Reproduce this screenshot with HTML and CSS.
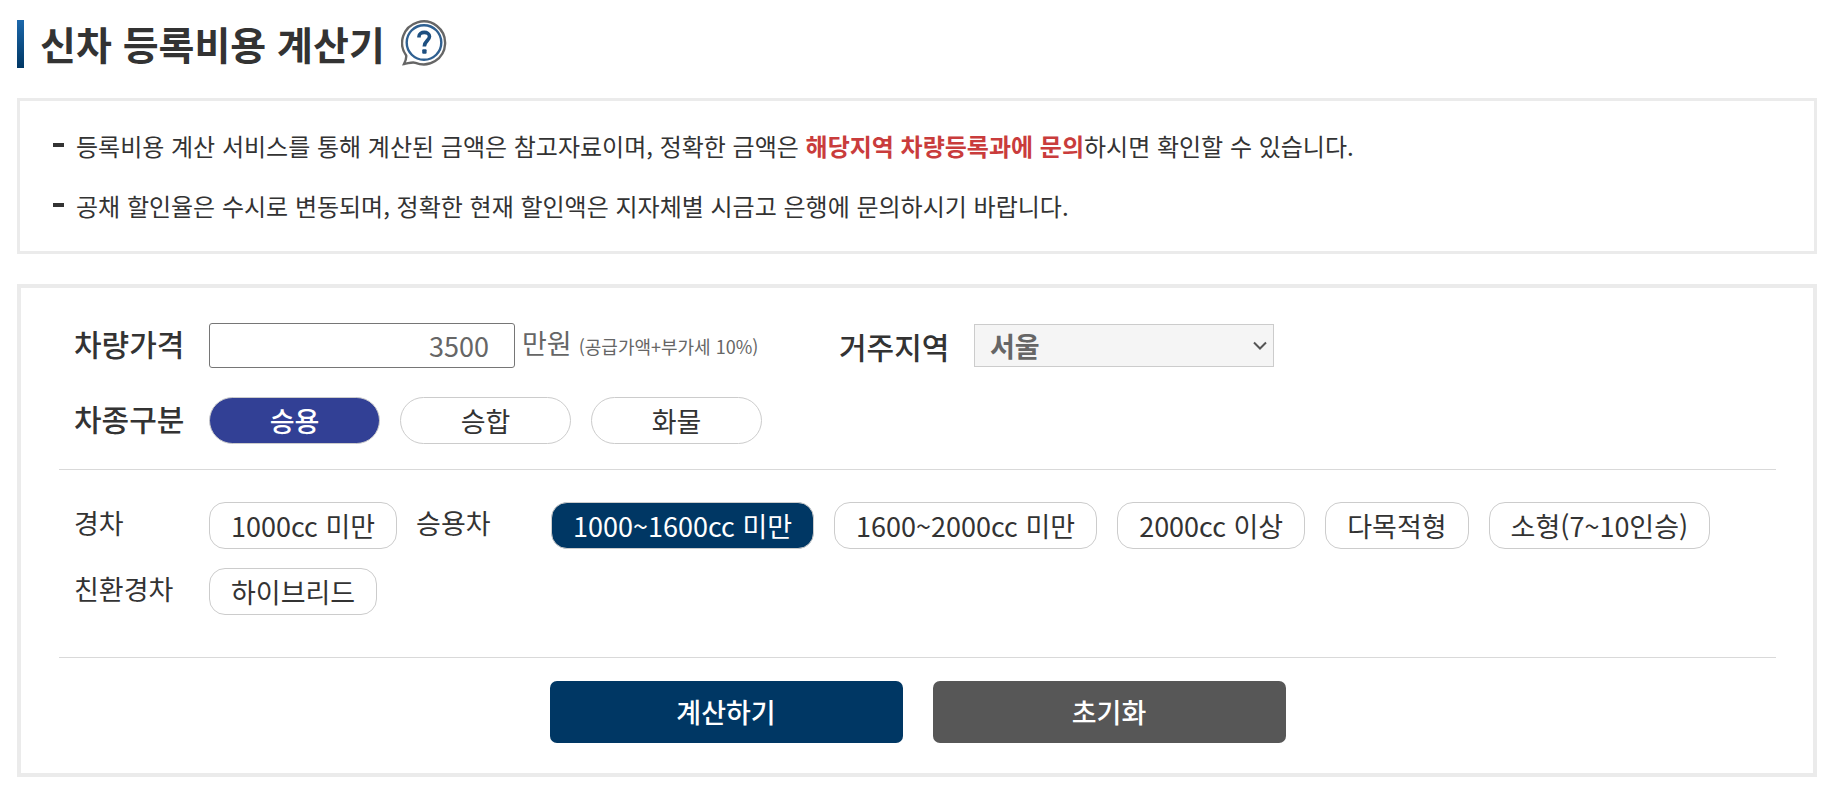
FILE: index.html
```html
<!DOCTYPE html>
<html lang="ko">
<head>
    <meta charset="UTF-8">
    <meta name="viewport" content="width=device-width, initial-scale=1.0">
    <title>신차 등록비용 계산기</title>
    <link rel="stylesheet" href="styles.css">
</head>
<body>
    <header class="page-title">
        <h1>신차 등록비용 계산기</h1>
        <button type="button" class="help-button" aria-label="도움말">
            <svg viewBox="0 0 46 46" width="46" height="46" fill="none">
                <path d="M3 44 C4.5 41 5.5 38 5.2 35.5 A21.5 21.5 0 1 1 14.5 42.8 C11 41.5 7 43.6 3 44 Z" stroke="#666" stroke-width="2.4"/>
                <circle cx="23" cy="22.5" r="17.3" stroke="#2f6091" stroke-width="2.4"/>
                <path d="M18 17.5 V16.5 C18 11 28.5 11 28.5 16.5 C28.5 20.5 23.3 21 23.3 26.5" stroke="#1d4f80" stroke-width="3.6"/>
                <rect x="21.2" y="29.3" width="4.4" height="4.4" rx="1" fill="#1d4f80"/>
            </svg>
        </button>
    </header>

    <ul class="notice">
        <li>등록비용 계산 서비스를 통해 계산된 금액은 참고자료이며, 정확한 금액은 <strong>해당지역 차량등록과에 문의</strong>하시면 확인할 수 있습니다.</li>
        <li>공채 할인율은 수시로 변동되며, 정확한 현재 할인액은 지자체별 시금고 은행에 문의하시기 바랍니다.</li>
    </ul>

    <form class="calculator">
        <div class="section basic">
            <div class="row">
                <label class="label" for="price">차량가격</label>
                <div class="price">
                    <input type="text" id="price" class="price-input" value="3500">
                    <span class="unit">만원</span>
                    <span class="hint">(공급가액+부가세 10%)</span>
                </div>
                <label class="label region-label" for="region">거주지역</label>
                <div class="region">
                    <select id="region">
                        <option selected>서울</option>
                        <option>부산</option>
                        <option>대구</option>
                        <option>인천</option>
                    </select>
                    <svg class="arrow" viewBox="0 0 14 9" width="14" height="9" fill="none">
                        <path d="M1 1.5 L7 7.5 L13 1.5" stroke="#555" stroke-width="2"/>
                    </svg>
                </div>
            </div>
            <div class="row">
                <span class="label">차종구분</span>
                <div class="options">
                    <button type="button" class="pill active">승용</button>
                    <button type="button" class="pill">승합</button>
                    <button type="button" class="pill">화물</button>
                </div>
            </div>
        </div>

        <div class="section detail">
            <div class="group">
                <span class="sub-label">경차</span>
                <button type="button" class="option">1000cc 미만</button>
            </div>
            <div class="group">
                <span class="sub-label">승용차</span>
                <div class="options">
                    <button type="button" class="option active">1000~1600cc 미만</button>
                    <button type="button" class="option">1600~2000cc 미만</button>
                    <button type="button" class="option">2000cc 이상</button>
                    <button type="button" class="option">다목적형</button>
                    <button type="button" class="option">소형(7~10인승)</button>
                </div>
            </div>
            <div class="group">
                <span class="sub-label">친환경차</span>
                <button type="button" class="option">하이브리드</button>
            </div>
        </div>

        <div class="actions">
            <button type="button" class="submit">계산하기</button>
            <button type="reset" class="reset">초기화</button>
        </div>
    </form>

    <script>
        // one choice per kind of button
        function setupChoice(selector) {
            const buttons = document.querySelectorAll(selector);
            buttons.forEach(button => {
                button.addEventListener('click', () => {
                    buttons.forEach(other => other.classList.remove('active'));
                    button.classList.add('active');
                });
            });
        }

        setupChoice('.pill');
        setupChoice('.option');
    </script>
</body>
</html>
```
FILE: styles.css
```css
* {
    box-sizing: border-box;
}

body {
    margin: 0;
    padding: 20px 11px 14px 17px;
    background: #fff;
    color: #333;
    font-family: "Noto Sans CJK KR", sans-serif;
    font-size: 27px;
    line-height: 38px;
}

button,
input,
select {
    font-family: inherit;
    font-size: inherit;
    line-height: inherit;
}

button {
    cursor: pointer;
}

.page-title {
    display: flex;
    align-items: center;
    gap: 16px;
    height: 48px;
    margin-bottom: 30px;
}

.page-title::before {
    content: "";
    width: 7px;
    height: 48px;
    background: linear-gradient(#1c68ab, #003764);
}

.page-title h1 {
    margin: 0;
    padding-bottom: 2px;
    font-size: 39px;
    font-weight: bold;
    line-height: 46px;
}

.help-button {
    display: flex;
    padding: 0;
    border: none;
    background: none;
    margin-bottom: 3px;
}

.notice {
    margin: 0 0 30px;
    padding: 15px 33px;
    border: 3px solid #ebebeb;
    list-style: none;
    font-size: 24px;
    line-height: 60px;
}

.notice li {
    display: flow-root;
    padding-left: 23px;
    background: linear-gradient(#333, #333) 0 27px / 11px 4px no-repeat;
}

.notice strong {
    color: #c93c3c;
}

.calculator {
    padding: 35px 37px 30px 38px;
    border: 4px solid #ebebeb;
}

.section {
    border-bottom: 1px solid #d9d9d9;
}

.basic {
    padding: 0 15px 25px;
}

.row {
    display: flex;
    align-items: center;
}

.row + .row {
    margin-top: 29px;
}

.label,
.sub-label {
    flex: none;
    width: 135px;
    padding-bottom: 6px;
}

.label {
    font-size: 30px;
    font-weight: 500;
}

.region-label {
    padding-bottom: 0;
}

.price {
    display: flex;
    align-items: center;
    width: 630px;
    color: #666;
}

.price-input {
    width: 306px;
    height: 45px;
    padding: 0 25px;
    border: 1px solid #767676;
    border-radius: 3px;
    color: #666;
    text-align: right;
}

.unit {
    margin: 0 7px;
    padding-bottom: 6px;
}

.hint {
    font-size: 18px;
}

.region {
    position: relative;
}

.region select {
    width: 300px;
    height: 43px;
    padding: 0 15px;
    border: 1px solid #ccc;
    border-radius: 0;
    background: #f5f5f5;
    color: #666;
    font-weight: bold;
    appearance: none;
}

.arrow {
    position: absolute;
    top: 17px;
    right: 7px;
    pointer-events: none;
}

.options {
    display: flex;
    flex-wrap: wrap;
    gap: 19px 20px;
}

.pill,
.option {
    height: 47px;
    padding: 0 21px;
    border: 1px solid #ccc;
    border-radius: 16px;
    background: #fff;
    color: #333;
}

.pill {
    width: 171px;
    border-radius: 24px;
}

.pill.active {
    background: #324095;
    color: #fff;
    font-weight: 500;
}

.option.active {
    background: #003764;
    color: #fff;
}

.detail {
    display: flex;
    flex-wrap: wrap;
    gap: 19px;
    padding: 32px 15px 42px;
}

.group {
    display: flex;
    align-items: center;
}

.actions {
    display: flex;
    justify-content: center;
    gap: 30px;
    padding-top: 23px;
}

.submit,
.reset {
    width: 353px;
    height: 62px;
    border: none;
    border-radius: 7px;
    color: #fff;
    font-weight: 500;
}

.submit {
    background: #003764;
}

.reset {
    background: #575757;
}
```
